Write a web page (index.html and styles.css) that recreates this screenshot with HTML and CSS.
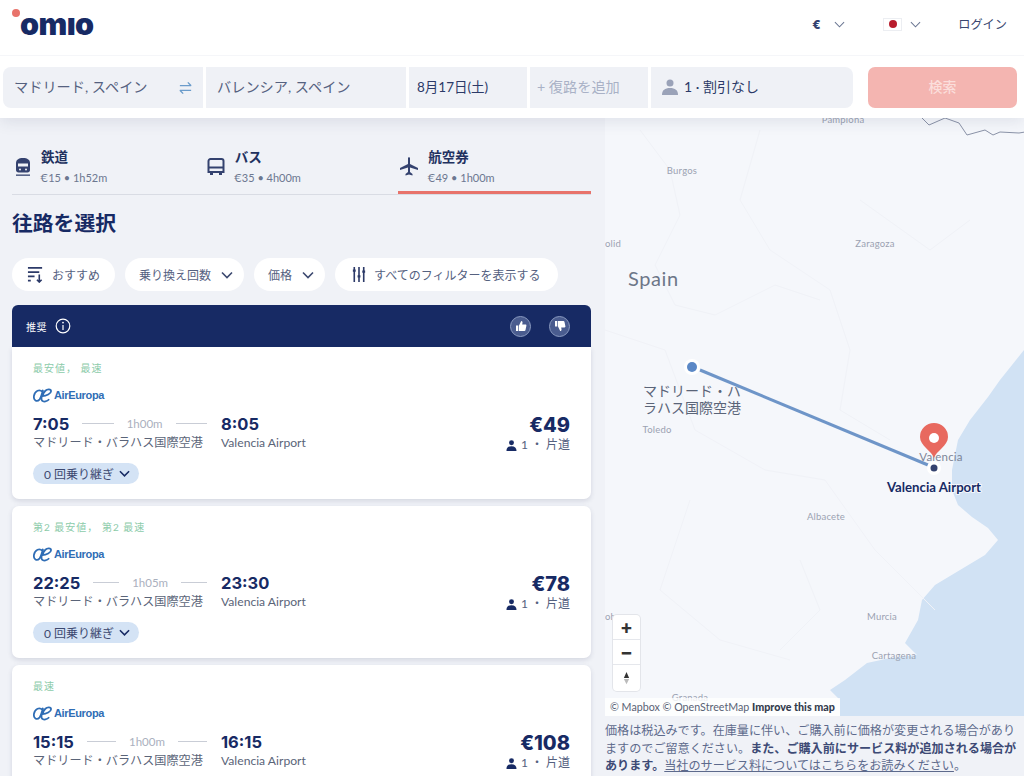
FILE: index.html
```html
<!DOCTYPE html>
<html lang="ja">
<head>
<meta charset="utf-8">
<title>Omio</title>
<link rel="stylesheet" href="styles.css">
</head>
<body>
<header class="topbar">
  <div class="logo"><span class="logo-dot"></span><span class="logo-text">omıo</span></div>
  <nav class="topnav">
    <span class="nav-cur">€</span>
    <svg class="chev-nav" viewBox="0 0 12 7"><path d="M1 1l5 5 5-5"/></svg>
    <span class="flag"><span class="flag-sun"></span></span>
    <svg class="chev-nav chev-flag" viewBox="0 0 12 7"><path d="M1 1l5 5 5-5"/></svg>
    <span class="nav-login">ログイン</span>
  </nav>
</header>
<section class="searchbar">
  <div class="fields">
    <div class="field field-from"><span class="field-text">マドリード, スペイン</span>
      <svg class="swap" viewBox="0 0 16 14"><path d="M2 4.500h12M10.500 1l3.500 3.500M14 9.500H2M5.500 13L2 9.500"/></svg>
    </div>
    <div class="field field-to"><span class="field-text">バレンシア, スペイン</span></div>
    <div class="field field-date"><span class="field-text">8月17日(土)</span></div>
    <div class="field field-return"><span class="field-text">+ 復路を追加</span></div>
    <div class="field field-pax">
      <svg class="pax-icon" viewBox="0 0 16 16"><circle cx="8" cy="4" r="3.500"/><path d="M0 16c0-5 3-7 8-7s8 2 8 7z"/></svg>
      <span class="field-text">1 · 割引なし</span>
    </div>
  </div>
  <button class="search-btn">検索</button>
</section>
<main class="layout">
  <section class="results">
    <div class="tabs">
      <div class="tab">
        <svg class="tab-icon" viewBox="0 0 16 20"><path d="M8 1C3.500 1 1 3 1 6v7c0 1.500 1 2.500 2.500 2.500h9c1.500 0 2.500-1 2.500-2.500V6c0-3-2.500-5-7-5z"/><path class="cut" d="M3 6.500h10v3H3z"/><circle class="cut" cx="5" cy="12.500" r="1"/><circle class="cut" cx="11" cy="12.500" r="1"/><path d="M1 17.500h14v1.300H1z"/></svg>
        <div><div class="tab-name">鉄道</div><div class="tab-sub">€15 • 1h52m</div></div>
      </div>
      <div class="tab">
        <svg class="tab-icon" viewBox="0 0 18 20"><path class="hollow" d="M3.500 2h11A2 2 0 0 1 16.500 4v11h-15V4A2 2 0 0 1 3.500 2zM1.500 10.500h15"/><path d="M3 15h3v3H3zM12 15h3v3h-3z"/></svg>
        <div><div class="tab-name">バス</div><div class="tab-sub">€35 • 4h00m</div></div>
      </div>
      <div class="tab tab-active">
        <svg class="tab-icon tab-plane" viewBox="0 0 20 20"><path d="M9 1c0-1 2-1 2 0v6l8 4v2l-8-2.500V15l2.500 2v1.500L10 17.500l-3.500 1V17L9 15v-4.500L1 13v-2l8-4z"/></svg>
        <div><div class="tab-name">航空券</div><div class="tab-sub">€49 • 1h00m</div></div>
      </div>
    </div>
    <h1 class="title">往路を選択</h1>
    <div class="filters">
      <div class="pill">
        <svg class="pill-icon" viewBox="0 0 18 18"><path d="M1 2h15M1 6.500h12M1 11h7M1 15.500h3M13 9v8M10.500 14.500L13 17l2.500-2.500"/></svg>
        おすすめ
      </div>
      <div class="pill">乗り換え回数<svg class="pill-chev" viewBox="0 0 12 7"><path d="M1 1l5 5 5-5"/></svg></div>
      <div class="pill">価格<svg class="pill-chev" viewBox="0 0 12 7"><path d="M1 1l5 5 5-5"/></svg></div>
      <div class="pill">
        <svg class="pill-icon" viewBox="0 0 14 18"><path d="M2 1v16M7 1v16M12 1v16"/><path class="knob" d="M.5 5h3M5.500 11h3M10.500 6h3"/></svg>
        すべてのフィルターを表示する
      </div>
    </div>
    <div class="rec-head">
      <span class="rec-label">推奨</span>
      <svg class="info" viewBox="0 0 16 16"><circle cx="8" cy="8" r="6.800"/><path d="M8 7v5"/><circle class="info-dot" cx="8" cy="4.600" r=".9"/></svg>
      <span class="thumb thumb-up"><svg viewBox="0 0 12 12"><path d="M1 5.500h2.300V11H1zM4 5.500L6.200 1c1 0 1.500.7 1.300 1.800L7.200 4.500H10.500c.7 0 1 .6.900 1.200L10.500 10c-.1.600-.5 1-1.100 1H4z"/></svg></span>
      <span class="thumb"><svg viewBox="0 0 12 12"><path d="M1 6.500h2.300V1H1zM4 6.500L6.200 11c1 0 1.500-.7 1.300-1.800L7.200 7.500H10.500c.7 0 1-.6.900-1.200L10.500 2c-.1-.6-.5-1-1.100-1H4z"/></svg></span>
    </div>
    <article class="card card-first">
      <div class="tag">最安値， 最速</div>
      <div class="airline">
        <svg class="ae" viewBox="0 0 20 15"><path d="M9.800 3.500C7 .8 2 2 1 8c-.7 4.500 3 7 6 3.500C8.500 9.500 9.500 6 10.500 1.500 9.500 6 8 11 9.500 13c1.500 1.500 5.500 1 7.500-1.500M10 8c4 0 9-2.500 9-5 0-2.500-4-2.500-6-.5-1.500 1.500-2.500 3-3 5.500"/></svg>
        <span class="ae-name">AirEuropa</span>
      </div>
      <div class="row">
        <div class="route">
          <div class="leg"><b class="time">7:05</b><i class="dash"></i><span class="dur">1h00m</span><i class="dash"></i></div>
          <b class="time">8:05</b>
          <span class="place">マドリード・バラハス国際空港</span>
          <span class="place">Valencia Airport</span>
        </div>
        <div class="fare">
          <div class="price">€49</div>
          <div class="fare-sub"><svg class="mini-pax" viewBox="0 0 12 12"><circle cx="6" cy="3" r="2.700"/><path d="M.5 12c0-3.500 2-5.200 5.500-5.200s5.500 1.700 5.500 5.200z"/></svg>1 ・ 片道</div>
        </div>
      </div>
      <div class="chip">0 回乗り継ぎ<svg class="chip-chev" viewBox="0 0 12 7"><path d="M1 1l5 5 5-5"/></svg></div>
    </article>
    <article class="card">
      <div class="tag">第2 最安値， 第2 最速</div>
      <div class="airline">
        <svg class="ae" viewBox="0 0 20 15"><path d="M9.800 3.500C7 .8 2 2 1 8c-.7 4.500 3 7 6 3.500C8.500 9.500 9.500 6 10.500 1.500 9.500 6 8 11 9.500 13c1.500 1.500 5.500 1 7.500-1.500M10 8c4 0 9-2.500 9-5 0-2.500-4-2.500-6-.5-1.500 1.500-2.500 3-3 5.500"/></svg>
        <span class="ae-name">AirEuropa</span>
      </div>
      <div class="row">
        <div class="route">
          <div class="leg"><b class="time">22:25</b><i class="dash"></i><span class="dur">1h05m</span><i class="dash"></i></div>
          <b class="time">23:30</b>
          <span class="place">マドリード・バラハス国際空港</span>
          <span class="place">Valencia Airport</span>
        </div>
        <div class="fare">
          <div class="price">€78</div>
          <div class="fare-sub"><svg class="mini-pax" viewBox="0 0 12 12"><circle cx="6" cy="3" r="2.700"/><path d="M.5 12c0-3.500 2-5.200 5.500-5.200s5.500 1.700 5.500 5.200z"/></svg>1 ・ 片道</div>
        </div>
      </div>
      <div class="chip">0 回乗り継ぎ<svg class="chip-chev" viewBox="0 0 12 7"><path d="M1 1l5 5 5-5"/></svg></div>
    </article>
    <article class="card">
      <div class="tag">最速</div>
      <div class="airline">
        <svg class="ae" viewBox="0 0 20 15"><path d="M9.800 3.500C7 .8 2 2 1 8c-.7 4.500 3 7 6 3.500C8.500 9.500 9.500 6 10.500 1.500 9.500 6 8 11 9.500 13c1.500 1.500 5.500 1 7.500-1.500M10 8c4 0 9-2.500 9-5 0-2.500-4-2.500-6-.5-1.500 1.500-2.500 3-3 5.500"/></svg>
        <span class="ae-name">AirEuropa</span>
      </div>
      <div class="row">
        <div class="route">
          <div class="leg"><b class="time">15:15</b><i class="dash"></i><span class="dur">1h00m</span><i class="dash"></i></div>
          <b class="time">16:15</b>
          <span class="place">マドリード・バラハス国際空港</span>
          <span class="place">Valencia Airport</span>
        </div>
        <div class="fare">
          <div class="price">€108</div>
          <div class="fare-sub"><svg class="mini-pax" viewBox="0 0 12 12"><circle cx="6" cy="3" r="2.700"/><path d="M.5 12c0-3.500 2-5.200 5.500-5.200s5.500 1.700 5.500 5.200z"/></svg>1 ・ 片道</div>
        </div>
      </div>
    </article>
  </section>
  <aside class="side">
    <div class="map">
      <svg class="map-art" viewBox="605 118 419 598">
        <path class="sea" d="M1024 350L1016 360 1000 380 988 397 970 420 958 440 952 470 952 490 958 505 972 517 988 528 998 540 985 555 960 570 935 585 922 600 918 620 905 643 917 655 890 658 867 663 845 680 830 690 840 700 840 716H1024z"/>
        <path class="border" d="M922 118l7 7 16-7 14 5 8 12 18-5 8 5 7-3 19 1 6-1"/>
        <path class="prov" d="M640 130l30 40 10 45-25 50 20 40 40 10 60-30 45 15M760 130l-20 70 30 50 60 40 20 60-10 60 50 30M605 330l60 20 30 80 70 40 60 10 50 70 60 60M690 500l-30 90 60 50 70 20M860 200l70 50 40-30M800 560l20 50-40 40"/>
        <text class="city" x="843" y="123" text-anchor="middle">Pamplona</text>
        <text class="city" x="682" y="174" text-anchor="middle">Burgos</text>
        <text class="city" x="875" y="247" text-anchor="middle">Zaragoza</text>
        <text class="city" x="605" y="247">olid</text>
        <text class="country" x="628" y="286">Spain</text>
        <text class="city" x="657" y="433" text-anchor="middle">Toledo</text>
        <text class="city" x="826" y="520" text-anchor="middle">Albacete</text>
        <text class="city" x="882" y="620" text-anchor="middle">Murcia</text>
        <text class="city" x="894" y="659" text-anchor="middle">Cartagena</text>
        <text class="city" x="605" y="620">oba</text>
        <text class="city" x="690" y="701" text-anchor="middle">Granada</text>
        <text class="city city-large" x="941" y="461" text-anchor="middle">Valencia</text>
        <text class="stop" x="692" y="396" text-anchor="middle">マドリード・バ</text>
        <text class="stop" x="692" y="413" text-anchor="middle">ラハス国際空港</text>
        <text class="dest" x="934" y="492" text-anchor="middle">Valencia Airport</text>
        <path class="route-line" d="M700 370L928 465"/>
        <circle class="halo" cx="692" cy="367" r="8"/>
        <circle class="origin" cx="692" cy="367" r="5"/>
        <circle class="halo" cx="934" cy="468" r="7"/>
        <circle class="target" cx="934" cy="468" r="3.500"/>
        <path class="pin" d="M934 458c-2-7-14-12-14-21a14 14 0 0 1 28 0c0 9-12 14-14 21z"/>
        <circle class="halo" cx="934" cy="438" r="5"/>
      </svg>
      <div class="zoom">
        <div class="zoom-btn">+</div>
        <div class="zoom-btn">−</div>
        <div class="zoom-btn zoom-north"><svg viewBox="0 0 8 16"><path class="n-up" d="M4 1l3 7H1z"/><path class="n-down" d="M4 15L1 9h6z"/></svg></div>
      </div>
      <div class="attrib">© Mapbox © OpenStreetMap <b>Improve this map</b></div>
    </div>
    <p class="note">価格は税込みです。在庫量に伴い、ご購入前に価格が変更される場合がありますのでご留意ください。<b>また、ご購入前にサービス料が追加される場合があります。</b><a class="note-link">当社のサービス料についてはこちらをお読みください</a>。</p>
  </aside>
</main>
</body>
</html>
```
FILE: styles.css
```css
* { box-sizing: border-box; }
html, body { margin: 0; height: 776px; overflow: hidden; }
body {
  font-family: Lato, "Noto Sans CJK JP", sans-serif;
  font-variant-numeric: lining-nums;
  color: #172a64;
  background: #f0f2f7;
  display: flex;
  flex-direction: column;
}
svg { display: block; flex: none; }

.topbar {
  height: 56px;
  flex: none;
  background: #fff;
  border-bottom: 1px solid #f5f6f9;
  display: flex;
  justify-content: space-between;
  align-items: center;
  padding: 0 17px 7px 20px;
  position: relative;
  z-index: 3;
}
.logo { position: relative; height: 36px; display: flex; align-items: center; }
.logo-dot {
  position: absolute; left: -8px; top: 3px;
  width: 8px; height: 8px; border-radius: 50%;
  background: #e8736b;
}
.logo-text {
  font-family: Inter, sans-serif;
  font-weight: 900;
  font-size: 30.500px;
  letter-spacing: -.6px;
  line-height: 36px;
  color: #172a64;
}
.topnav { display: flex; align-items: center; }
.nav-cur { font-size: 12px; font-weight: 900; font-family: Inter, sans-serif; width: 22px; text-align: left; color: #34426f; }
.chev-nav { width: 11px; height: 7px; fill: none; stroke: #6a7692; stroke-width: 1.100; margin-right: 38px; }
.chev-flag { margin-right: 37px; }
.flag {
  width: 19px; height: 13px; background: #fff; border: 1px solid #eceef2;
  display: flex; align-items: center; justify-content: center; margin-right: 8px;
}
.flag-sun { width: 8px; height: 8px; border-radius: 50%; background: #b81c2c; }
.nav-login { font-size: 12.200px; color: #3a4770; }

.searchbar {
  flex: none;
  height: 62px;
  background: #fff;
  display: flex;
  padding: 11px 7px 10px 3px;
  gap: 15px;
  box-shadow: 0 4px 14px rgba(40, 50, 90, .10);
  position: relative;
  z-index: 2;
}
.fields { display: flex; gap: 3px; width: 850px; border-radius: 8px; overflow: hidden; }
.field {
  background: #eff1f6;
  display: flex;
  align-items: center;
  font-size: 14.200px;
  color: #55617f;
  padding-left: 11px;
}
.field-text { position: relative; top: -2px; }
.field-from { width: 200px; justify-content: space-between; padding-right: 10px; }
.swap { width: 15px; height: 14px; fill: none; stroke: #6b9ccb; stroke-width: 1.500; }
.field-to { width: 200px; }
.field-date { width: 118px; padding-left: 8px; color: #2c3a68; font-size: 13.500px; }
.field-return { width: 118px; padding-left: 7px; color: #a9b1c6; }
.field-pax { flex: 1; gap: 6px; color: #2c3a68; font-size: 14px; }
.pax-icon { width: 16px; height: 16px; fill: #9aa2b8; position: relative; top: -1px; }
.search-btn {
  width: 149px;
  border: 0;
  border-radius: 7px;
  background: #f4b5b1;
  color: #fbdedb;
  font: 500 14px "Noto Sans CJK JP", sans-serif;
  padding-bottom: 5px;
}

.layout { flex: 1; min-height: 0; display: flex; overflow: hidden; }
.results { width: 605px; flex: none; padding: 27px 14px 0 12px; }
.side { flex: 1; min-width: 0; display: flex; flex-direction: column; }

.tabs { display: flex; height: 50px; border-bottom: 1px solid #d9dce4; }
.tab { flex: 1; display: flex; gap: 10px; padding-left: 3px; align-items: center; position: relative; padding-bottom: 6px; }
.tab-active { padding-left: 2px; margin-left: 1px; }
.tab-active::after {
  content: ""; position: absolute; left: 0; right: 0; bottom: 0; height: 3px; background: #e8736b;
}
.tab-icon { width: 16px; height: 20px; fill: #34426f; }
.tab-icon .cut { fill: #f0f2f7; }
.tab-icon .hollow { fill: none; stroke: #34426f; stroke-width: 2; }
.tab-plane { width: 20px; height: 20px; margin-left: -1px; margin-right: -1px; }
.tab:nth-child(2) { padding-left: 1px; }
.tab:nth-child(2) .tab-icon { width: 18px; }
.tab-name { font-size: 13.500px; font-weight: 700; line-height: 19px; color: #22315f; }
.tab-sub { font-size: 11px; line-height: 15px; color: #6c7790; margin-top: 3px; margin-left: -1px; }

.title { margin: 16px 0 23px; font-size: 20.800px; font-weight: 700; line-height: 24px; color: #172a64; }
.filters { display: flex; gap: 10px; margin-bottom: 14px; }
.pill {
  height: 33px; background: #fff; border-radius: 17px;
  display: flex; align-items: center; padding: 0 15px;
  font-size: 12px; color: #55617f; white-space: nowrap;
}
.pill-icon { width: 17px; height: 17px; fill: none; stroke: #2c3a68; stroke-width: 1.700; margin-right: 8px; }
.pill-icon .knob { stroke-width: 2.400; }
.pill-chev { width: 12px; height: 8px; fill: none; stroke: #3c4970; stroke-width: 1.600; margin-left: 10px; }
.pill:first-child { padding-right: 15px; }
.pill:nth-child(2) { padding: 0 11px 0 14px; }
.pill:nth-child(3) { padding: 0 11px 0 14px; }
.pill:last-child { width: 223px; padding-right: 0; }
.pill:last-child .pill-icon { width: 14px; margin-left: 2px; margin-right: 8px; }

.rec-head {
  height: 42px; background: #172a64; border-radius: 6px 6px 0 0;
  display: flex; align-items: center; padding: 0 21px 0 14px; color: #fff;
}
.rec-label { font-size: 10px; letter-spacing: .5px; }
.info { width: 16px; height: 16px; margin-left: 8px; fill: none; stroke: #fff; stroke-width: 1.200; }
.info .info-dot { fill: #fff; stroke: none; }
.thumb {
  width: 21px; height: 21px; border-radius: 50%;
  background: #4a5c8f; border: 1.500px solid #8a9ac0;
  display: flex; align-items: center; justify-content: center;
  margin-left: 18px;
}
.thumb-up { margin-left: auto; }
.thumb svg { width: 12px; height: 12px; fill: #fff; }

.card {
  background: #fff; border-radius: 7px;
  box-shadow: 0 2px 5px rgba(40, 50, 90, .14);
  padding: 15px 21px 14px;
  margin-bottom: 7px;
  height: 152px;
}
.card-first { border-radius: 0 0 7px 7px; }
.tag { font-size: 10px; line-height: 13px; color: #8ccbaa; letter-spacing: 1px; }
.airline { display: flex; align-items: center; gap: 2px; margin-top: 12px; height: 16px; }
.ae { width: 19px; height: 15px; fill: none; stroke: #2f6db5; stroke-width: 1.900; }
.ae-name {
  font-family: "Liberation Sans", sans-serif;
  font-weight: 700;
  font-size: 11px;
  color: #2f6db5;
  letter-spacing: -.35px;
}
.row { display: flex; justify-content: space-between; margin-top: 11px; }
.route { display: grid; grid-template-columns: 174px auto; column-gap: 14px; align-items: center; }
.leg { display: flex; align-items: center; gap: 13px; }
.dash { flex: 1; height: 1px; background: #c9cdd6; }
.time { font-family: Inter, sans-serif; font-size: 16.500px; font-weight: 700; line-height: 18px; color: #172a64; }
.dur { font-size: 11.500px; color: #aab0be; }
.place { font-size: 12.150px; line-height: 18px; color: #5a6478; white-space: nowrap; }
.fare { text-align: right; margin-top: -1px; }
.price { font-family: Inter, sans-serif; font-size: 20px; font-weight: 800; line-height: 24px; color: #172a64; }
.fare-sub { display: flex; justify-content: flex-end; align-items: center; gap: 4px; font-size: 12px; line-height: 16px; color: #55617f; }
.mini-pax { width: 11px; height: 11px; fill: #172a64; }
.chip {
  display: inline-flex; align-items: center; gap: 5px;
  height: 21px; margin-top: 10px; padding: 0 9px 0 11px;
  background: #d4e3f5; border-radius: 11px;
  font-size: 12px; color: #3c4970;
}
.chip-chev { width: 11px; height: 7px; fill: none; stroke: #172a64; stroke-width: 1.700; }

.map { position: relative; height: 598px; flex: none; background: #f5f7fb; overflow: hidden; }
.map-art { width: 419px; height: 598px; }
.sea { fill: #d1e2f4; }
.border { fill: none; stroke: #8b93a8; stroke-width: 1; }
.prov { fill: none; stroke: #f0f2f7; stroke-width: 1; }
.city { font-size: 9.500px; fill: #9ba2b2; letter-spacing: .2px; }
.city-large { font-size: 11.500px; fill: #7d8598; }
.country { font-size: 20px; fill: #6d7688; letter-spacing: .6px; }
.stop { font-size: 14px; fill: #5a6478; stroke: #f5f7fb; stroke-width: 2px; paint-order: stroke; }
.dest { font-size: 13.200px; font-weight: 700; fill: #172a64; stroke: #f5f7fb; stroke-width: 2px; paint-order: stroke; }
.route-line { stroke: #6e95c8; stroke-width: 3; fill: none; }
.halo { fill: #fff; }
.origin { fill: #5b88c6; }
.target { fill: #34426f; }
.pin { fill: #e8695f; }
.zoom {
  position: absolute; left: 8px; top: 497px; width: 27px;
  background: #fff; border-radius: 4px; box-shadow: 0 0 0 1px #e3e5ea;
}
.zoom-btn {
  height: 25px; display: flex; align-items: center; justify-content: center;
  font: 700 19px Inter, sans-serif; color: #333;
  border-bottom: 1px solid #e5e7ec;
}
.zoom-north { border-bottom: 0; height: 26px; }
.zoom-north svg { width: 7px; height: 14px; }
.n-up { fill: #333; }
.n-down { fill: #bbb; }
.attrib {
  position: absolute; left: 0; bottom: 0; width: 235px; height: 18px;
  background: rgba(255, 255, 255, .8);
  font-size: 10.700px; line-height: 18px; color: #596275; padding-left: 5px; white-space: nowrap;
}
.attrib b { color: #333c4d; font-weight: 900; }
.note { margin: 6px 0 0; width: 419px; font-size: 12.100px; line-height: 17.500px; color: #5d6a8c; }
.note b { color: #3d4a75; font-weight: 700; }
.note-link { text-decoration: underline; }
```
